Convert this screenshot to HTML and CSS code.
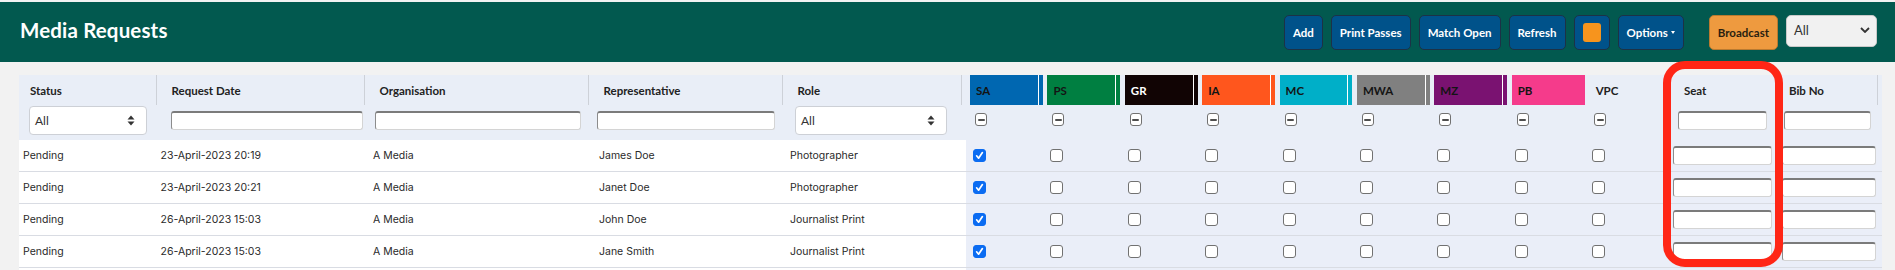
FILE: index.html
```html
<!DOCTYPE html>
<html lang="en">
<head>
  <meta charset="UTF-8">
  <title>Media Requests</title>
  <link rel="stylesheet" href="styles.css">
</head>
<body>
<div class="page">
  <header class="topbar">
    <h1 class="title">Media Requests</h1>
    <div class="actions">
      <button class="btn">Add</button>
      <button class="btn">Print Passes</button>
      <button class="btn">Match Open</button>
      <button class="btn">Refresh</button>
      <button class="btn"><span class="swatch"></span></button>
      <button class="btn">Options <span class="caret"></span></button>
      <button class="btn btn-broadcast">Broadcast</button>
      <div class="top-select">
        <span>All</span>
        <svg width="10" height="6" viewBox="0 0 10 6"><polyline points="1,1 5,5 9,1" fill="none" stroke="#333" stroke-width="1.8"/></svg>
      </div>
    </div>
  </header>

  <div class="table-wrap">
    <table class="grid">
      <colgroup>
        <col style="width:141.5px"><col style="width:208px"><col style="width:224px"><col style="width:194px"><col style="width:179px">
        <col style="width:77.4px"><col style="width:77.4px"><col style="width:77.4px"><col style="width:77.4px">
        <col style="width:77.4px"><col style="width:77.4px"><col style="width:77.4px"><col style="width:77.4px">
        <col style="width:88.3px"><col style="width:105px"><col style="width:104px">
      </colgroup>
      <thead>
        <tr class="head-row">
          <th class="sep"><span class="lbl">Status</span></th>
          <th class="sep"><span class="lbl">Request Date</span></th>
          <th class="sep"><span class="lbl">Organisation</span></th>
          <th class="sep"><span class="lbl">Representative</span></th>
          <th class="sep"><span class="lbl">Role</span></th>
          <th><div class="tag tag-sa">SA</div></th>
          <th><div class="tag tag-ps">PS</div></th>
          <th><div class="tag tag-gr">GR</div></th>
          <th><div class="tag tag-ia">IA</div></th>
          <th><div class="tag tag-mc">MC</div></th>
          <th><div class="tag tag-mwa">MWA</div></th>
          <th><div class="tag tag-mz">MZ</div></th>
          <th><div class="tag tag-pb">PB</div></th>
          <th><span class="lbl">VPC</span></th>
          <th><span class="lbl">Seat</span></th>
          <th class="sep"><span class="lbl">Bib No</span></th>
        </tr>
        <tr class="filter-row">
          <td><div class="pick f-status"><span>All</span><svg width="8" height="11" viewBox="0 0 8 11"><path d="M4 0.5 L7.5 4.5 H0.5 Z M4 10.5 L7.5 6.5 H0.5 Z" fill="#333"/></svg></div></td>
          <td><input class="field f-date" type="text"></td>
          <td><input class="field f-org" type="text"></td>
          <td><input class="field f-rep" type="text"></td>
          <td><div class="pick f-role"><span>All</span><svg width="8" height="11" viewBox="0 0 8 11"><path d="M4 0.5 L7.5 4.5 H0.5 Z M4 10.5 L7.5 6.5 H0.5 Z" fill="#333"/></svg></div></td>
          <td><span class="cb mixed"></span></td>
          <td><span class="cb mixed"></span></td>
          <td><span class="cb mixed"></span></td>
          <td><span class="cb mixed"></span></td>
          <td><span class="cb mixed"></span></td>
          <td><span class="cb mixed"></span></td>
          <td><span class="cb mixed"></span></td>
          <td><span class="cb mixed"></span></td>
          <td><span class="cb mixed"></span></td>
          <td><input class="field f-seat" type="text"></td>
          <td><input class="field f-bib" type="text"></td>
        </tr>
      </thead>
      <tbody class="rows">
        <tr>
          <td>Pending</td><td>23-April-2023 20:19</td><td>A Media</td><td>James Doe</td><td>Photographer</td>
          <td><span class="cb on"><svg width="11" height="11" viewBox="0 0 11 11"><path d="M2.6 5.8 L4.6 8.2 L8.4 2.6" fill="none" stroke="#fff" stroke-width="1.7" stroke-linecap="round" stroke-linejoin="round"/></svg></span></td>
          <td><span class="cb"></span></td><td><span class="cb"></span></td><td><span class="cb"></span></td><td><span class="cb"></span></td>
          <td><span class="cb"></span></td><td><span class="cb"></span></td><td><span class="cb"></span></td><td><span class="cb"></span></td>
          <td><input class="field r-seat" type="text"></td><td><input class="field r-bib" type="text"></td>
        </tr>
        <tr>
          <td>Pending</td><td>23-April-2023 20:21</td><td>A Media</td><td>Janet Doe</td><td>Photographer</td>
          <td><span class="cb on"><svg width="11" height="11" viewBox="0 0 11 11"><path d="M2.6 5.8 L4.6 8.2 L8.4 2.6" fill="none" stroke="#fff" stroke-width="1.7" stroke-linecap="round" stroke-linejoin="round"/></svg></span></td>
          <td><span class="cb"></span></td><td><span class="cb"></span></td><td><span class="cb"></span></td><td><span class="cb"></span></td>
          <td><span class="cb"></span></td><td><span class="cb"></span></td><td><span class="cb"></span></td><td><span class="cb"></span></td>
          <td><input class="field r-seat" type="text"></td><td><input class="field r-bib" type="text"></td>
        </tr>
        <tr>
          <td>Pending</td><td>26-April-2023 15:03</td><td>A Media</td><td>John Doe</td><td>Journalist Print</td>
          <td><span class="cb on"><svg width="11" height="11" viewBox="0 0 11 11"><path d="M2.6 5.8 L4.6 8.2 L8.4 2.6" fill="none" stroke="#fff" stroke-width="1.7" stroke-linecap="round" stroke-linejoin="round"/></svg></span></td>
          <td><span class="cb"></span></td><td><span class="cb"></span></td><td><span class="cb"></span></td><td><span class="cb"></span></td>
          <td><span class="cb"></span></td><td><span class="cb"></span></td><td><span class="cb"></span></td><td><span class="cb"></span></td>
          <td><input class="field r-seat" type="text"></td><td><input class="field r-bib" type="text"></td>
        </tr>
        <tr>
          <td>Pending</td><td>26-April-2023 15:03</td><td>A Media</td><td>Jane Smith</td><td>Journalist Print</td>
          <td><span class="cb on"><svg width="11" height="11" viewBox="0 0 11 11"><path d="M2.6 5.8 L4.6 8.2 L8.4 2.6" fill="none" stroke="#fff" stroke-width="1.7" stroke-linecap="round" stroke-linejoin="round"/></svg></span></td>
          <td><span class="cb"></span></td><td><span class="cb"></span></td><td><span class="cb"></span></td><td><span class="cb"></span></td>
          <td><span class="cb"></span></td><td><span class="cb"></span></td><td><span class="cb"></span></td><td><span class="cb"></span></td>
          <td><input class="field r-seat" type="text"></td><td><input class="field r-bib" type="text"></td>
        </tr>
        <tr class="more">
          <td></td><td></td><td></td><td></td><td></td>
          <td></td><td></td><td></td><td></td><td></td><td></td><td></td><td></td><td></td><td></td><td></td>
        </tr>
      </tbody>
    </table>
  </div>

  <div class="callout"></div>
</div>
</body>
</html>
```

FILE: styles.css
```css
html, body { margin: 0; }
body { background: #f2f2f2; font-family: Lato, "Liberation Sans", sans-serif; color: #222; }
.page { position: relative; padding-top: 2px; height: 268px; overflow: hidden; }

/* top bar */
.topbar {
  height: 60px;
  background: #02594f;
  display: flex;
  align-items: center;
  justify-content: space-between;
  padding: 0 18px 0 20px;
}
.title { margin: 0 0 5px; font-size: 20.5px; font-weight: 700; color: #fff; letter-spacing: 0.15px; }
.actions { display: flex; align-items: center; gap: 8px; }
.btn {
  height: 35px;
  padding: 0 8px;
  border: 1px solid #1c3246;
  border-radius: 5px;
  background: #00528a;
  color: #fff;
  font: 700 11.5px Lato, sans-serif;
  display: flex;
  align-items: center;
}
.swatch { display: block; width: 18px; height: 19px; border-radius: 3px; background: #f7941d; }
.caret {
  display: inline-block;
  margin-left: 3px;
  border-left: 2.5px solid transparent;
  border-right: 2.5px solid transparent;
  border-top: 3px solid #fff;
}
.btn-broadcast { margin-left: 17px; background: #ee9a3f; border-color: #b97a30; color: #2a1f10; }
.top-select {
  width: 91px;
  height: 32px;
  margin-bottom: 2px;
  box-sizing: border-box;
  border: 1px solid #c9c9c9;
  border-radius: 5px;
  background: #f1f1f1;
  display: flex;
  align-items: center;
  justify-content: space-between;
  padding: 0 6px 2px 7px;
  font-size: 13px;
  color: #333;
}

/* table */
.table-wrap { margin: 13px 0 0 19px; width: 1863px; }
.grid { width: 1863px; table-layout: fixed; border-collapse: collapse; }

.head-row th {
  height: 30px;
  padding: 0;
  text-align: left;
  font-size: 11.5px;
  font-weight: 700;
  color: #222;
  background: #e9eef7;
  position: relative;
}
.head-row th.sep::after {
  content: "";
  position: absolute;
  top: 0;
  bottom: 0;
  right: 4px;
  width: 1px;
  background: #cdd1d8;
}
.lbl { padding-left: 11px; }

.tag {
  position: relative;
  height: 30px;
  margin-left: 4.5px;
  padding-left: 6px;
  display: flex;
  align-items: center;
  color: #141414;
}
.tag::after {
  content: "";
  position: absolute;
  top: 0;
  bottom: 0;
  right: 4px;
  width: 1px;
  background: #fff;
}
.tag-sa { background: #0067b1; }
.tag-ps { background: #007f41; }
.tag-gr { background: #110404; color: #fff; }
.tag-ia { background: #ff561d; }
.tag-mc { background: #00afc8; }
.tag-mwa { background: #808080; }
.tag-mz { background: #7a1271; }
.tag-pb { background: #f53b8b; }
.tag-pb::after { display: none; }

.filter-row td { height: 35px; padding: 0; vertical-align: top; background: #e9eef7; }

.pick {
  box-sizing: border-box;
  height: 29px;
  margin-top: 1px;
  border: 1px solid #cdd0d6;
  border-radius: 4px;
  background: #fff;
  display: flex;
  align-items: center;
  justify-content: space-between;
  padding: 0 11px 0 5px;
  font-size: 12px;
  color: #333;
}
.f-status { width: 118px; margin-left: 10px; }
.f-role { width: 152px; margin-left: 8.5px; }

.field {
  display: block;
  box-sizing: border-box;
  height: 19px;
  padding: 0;
  background: #fff;
  border: 1px solid #d4d4d4;
  border-top: 2px solid #7b7b7b;
  border-left: 1.5px solid #8c8c8c;
  border-radius: 3px;
}
.filter-row .field { margin-top: 6px; }
.f-date { width: 192px; margin-left: 10.5px; }
.f-org { width: 206px; margin-left: 6.5px; }
.f-rep { width: 178px; margin-left: 4.5px; }
.f-seat { width: 89px; margin-left: 5px; }
.f-bib { width: 87px; margin-left: 6px; }

.cb {
  display: block;
  box-sizing: border-box;
  width: 13px;
  height: 13px;
  margin-left: 7.5px;
  border: 1px solid #717171;
  border-radius: 3px;
  background: #fff;
}
.cb.mixed {
  margin-top: 8px;
  margin-left: 9.5px;
  width: 12px;
  display: flex;
  align-items: center;
  justify-content: center;
}
.cb.mixed::before { content: ""; width: 7px; height: 2px; border-radius: 1px; background: #4e4e4e; }
.cb.on { background: #0b6cf2; border-color: #0b6cf2; }
.cb.on svg { display: block; }

.rows td {
  height: 31px;
  padding: 0;
  border-bottom: 1px solid #d9dce3;
  background: #fff;
  font: 10.5px Inter, "Noto Sans", sans-serif;
  color: #2a2a2a;
  white-space: nowrap;
}
.rows td:nth-child(1) { padding-left: 4px; }
.rows td:nth-child(3) { padding-left: 4.5px; }
.rows td:nth-child(4) { padding-left: 6.5px; }
.rows td:nth-child(5) { padding-left: 3.5px; }
.rows td:nth-child(n+6) { background: #eaeef8; }
.r-seat { width: 99px; }
.r-bib { width: 94px; margin-left: 4px; }

/* red highlight drawn over the Seat column */
.callout {
  position: absolute;
  left: 1663px;
  top: 61px;
  width: 120px;
  height: 206px;
  box-sizing: border-box;
  border: 8px solid #ff2616;
  border-radius: 22px;
}
```
